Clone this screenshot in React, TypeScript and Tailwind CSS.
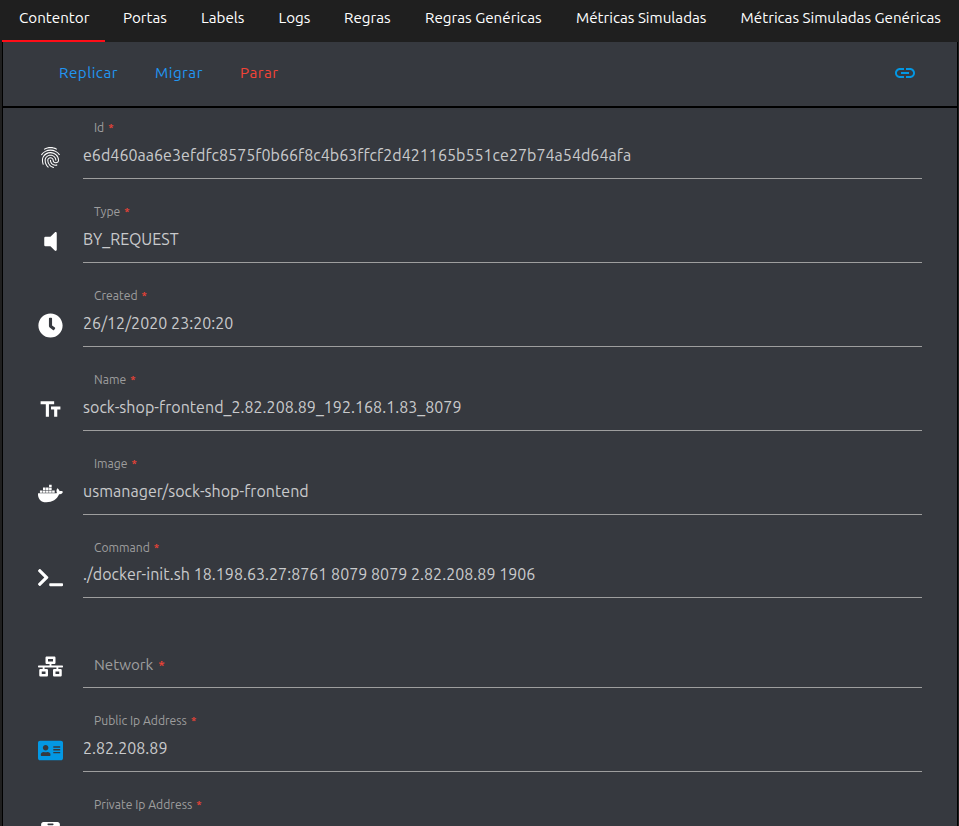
import type { IconType } from "react-icons";
import {
  FaAddressCard,
  FaClock,
  FaDocker,
  FaIdBadge,
  FaNetworkWired,
  FaTerminal,
  FaVolumeOff,
} from "react-icons/fa";
import { MdFingerprint, MdInsertLink, MdTextFields } from "react-icons/md";

const tabs = [
  { label: "Contentor", style: "w-[103px] mr-px" },
  { label: "Portas", style: "w-[78px]" },
  { label: "Labels", style: "w-[77.5px]" },
  { label: "Logs", style: "w-[65.5px]" },
  { label: "Regras", style: "w-[81px]" },
  { label: "Regras Genéricas", style: "w-[151px]" },
  { label: "Métricas Simuladas", style: "w-[164.6px]" },
  { label: "Métricas Simuladas Genéricas", style: "w-[234px]" },
];

type Field = {
  label: string;
  value?: string;
  icon: IconType;
  height?: string;
  accent?: boolean;
};

const fields: Field[] = [
  { label: "Id", value: "e6d460aa6e3efdfc8575f0b66f8c4b63ffcf2d421165b551ce27b74a54d64afa", icon: MdFingerprint },
  { label: "Type", value: "BY_REQUEST", icon: FaVolumeOff },
  { label: "Created", value: "26/12/2020 23:20:20", icon: FaClock },
  { label: "Name", value: "sock-shop-frontend_2.82.208.89_192.168.1.83_8079", icon: MdTextFields },
  { label: "Image", value: "usmanager/sock-shop-frontend", icon: FaDocker },
  { label: "Command", value: "./docker-init.sh 18.198.63.27:8761 8079 8079 2.82.208.89 1906", icon: FaTerminal, height: "h-[83px]" },
  { label: "Network", icon: FaNetworkWired, height: "h-[90px]" },
  { label: "Public Ip Address", value: "2.82.208.89", icon: FaAddressCard, accent: true },
  { label: "Private Ip Address", value: "", icon: FaIdBadge },
];

function FieldRow({ label, value, icon: Icon, height = "h-[84px]", accent }: Field) {
  return (
    <div className={`flex shrink-0 items-end pl-[35px] pr-[35px] ${height}`}>
      <Icon
        size={25}
        className={`mr-5 shrink-0 ${label === "Command" ? "mb-[8px]" : "mb-[9px]"} ${accent ? "text-[#0398e4]" : "text-white"}`}
      />
      <div className="flex min-w-0 flex-1 flex-col border-b border-[#9e9e9e]">
        {value !== undefined ? (
          <>
            <span className="pl-[11px] text-[12.16px] leading-4 text-[#9e9e9e]">
              {label}
              <span className="ml-1 text-[11px] font-medium text-[#f44336]">*</span>
            </span>
            <span
              className={`h-6 whitespace-nowrap text-[16px] leading-6 tracking-[0.04px] text-[#c9cacc] ${
                label === "Command" ? "mb-[11px] mt-[6px]" : "mb-[11px] mt-[7px]"
              } ${label === "Command" ? "pb-px" : ""}`}
            >
              {value}
            </span>
          </>
        ) : (
          <span className="mb-[10px] pl-[11px] text-[15.2px] leading-6 text-[#9e9e9e]">
            {label}
            <span className="ml-[5px] text-[13.5px] font-medium text-[#f44336]">*</span>
          </span>
        )}
      </div>
    </div>
  );
}

export default function App() {
  return (
    <div className="flex h-[826px] w-[959px] flex-col overflow-hidden bg-[#1f1f1f] font-['Ubuntu','Noto_Sans',sans-serif]">
      <nav className="flex h-[42px] shrink-0 pl-[2px]">
        {tabs.map((tab, i) => (
          <button
            key={tab.label}
            className={`shrink-0 whitespace-nowrap border-b-2 pl-[17px] pb-1 text-left text-[15.2px] text-white ${
              i === 0 ? "border-[#ff0d17]" : "border-transparent"
            } ${tab.style}`}
          >
            {tab.label}
          </button>
        ))}
      </nav>
      <main className="ml-[2px] mr-[1px] flex min-h-0 flex-1 flex-col border-x border-black bg-[#36393f]">
        <div className="flex h-[66px] shrink-0 items-center border-b-2 border-black pb-[2px] pl-14 pr-[40px] text-[15.2px] tracking-[0.5px] text-[#2196f3]">
          <button className="w-24 text-left">Replicar</button>
          <button className="w-[85px] text-left">Migrar</button>
          <button className="text-left text-[#f44336]">Parar</button>
          <MdInsertLink size={24} className="ml-auto text-[#0398e4]" />
        </div>
        <div className="-mt-[13px] flex min-h-0 flex-1 flex-col overflow-hidden">
          {fields.map((field) => (
            <FieldRow key={field.label} {...field} />
          ))}
        </div>
      </main>
    </div>
  );
}
